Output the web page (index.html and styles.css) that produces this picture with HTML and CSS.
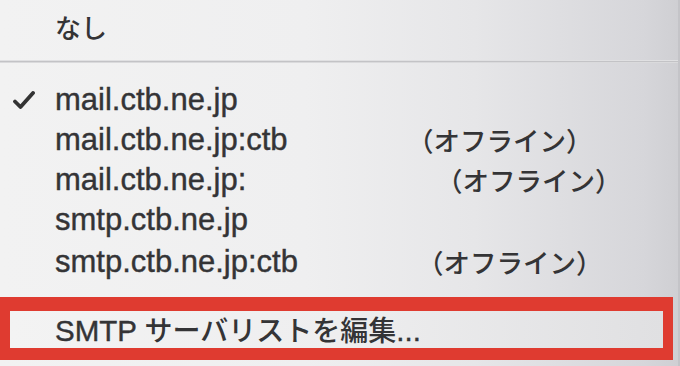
FILE: index.html
```html
<!DOCTYPE html>
<html lang="ja">
<head>
<meta charset="utf-8">
<title>SMTP</title>
<link rel="stylesheet" href="styles.css">
</head>
<body>
<div class="menu">
  <div class="item top"><span class="check"></span><span class="name jp">なし</span></div>
  <div class="sep"></div>
  <div class="list">
    <div class="item"><span class="check"><svg width="22" height="18" viewBox="0 0 22 18"><path d="M2 10.5 L7.5 16 L20 2" fill="none" stroke="#333" stroke-width="3.8" stroke-linecap="round" stroke-linejoin="round"/></svg></span><span class="name">mail.ctb.ne.jp</span></div>
    <div class="item"><span class="check"></span><span class="name">mail.ctb.ne.jp:ctb</span><span class="offline off-a">（オフライン）</span></div>
    <div class="item"><span class="check"></span><span class="name">mail.ctb.ne.jp:</span><span class="offline off-b">（オフライン）</span></div>
    <div class="item"><span class="check"></span><span class="name">smtp.ctb.ne.jp</span></div>
    <div class="item"><span class="check"></span><span class="name">smtp.ctb.ne.jp:ctb</span><span class="offline off-c">（オフライン）</span></div>
  </div>
  <div class="highlight">
    <div class="item edit"><span class="name">SMTP <span class="jp">サーバリストを編集</span>...</span></div>
  </div>
</div>
</body>
</html>
```
FILE: styles.css
```css
html, body {
  margin: 0;
  padding: 0;
}
body {
  width: 680px;
  height: 366px;
  overflow: hidden;
  font-family: "Liberation Sans", "Noto Sans CJK JP", sans-serif;
  color: #343436;
}
.menu {
  height: 366px;
  box-sizing: border-box;
  background: linear-gradient(to right, #f2f2f2 0%, #efeff0 45%, #e6e6e8 70%, #d6d6da 95%, #cfcfd3 100%);
  display: flex;
  flex-direction: column;
  border-right: 2px solid #c4c4c8;
}
.item {
  display: grid;
  grid-template-columns: 55px 352px 1fr;
  align-items: center;
  height: 40px;
  font-size: 31px;
  line-height: 40px;
}
.name {
  white-space: nowrap;
  -webkit-text-stroke: 0.4px #343436;
}
.jp {
  font-family: "Noto Sans CJK JP", sans-serif;
  font-weight: 500;
  -webkit-text-stroke: 0;
}
.item.top {
  height: 40px;
  margin-top: 7px;
  margin-bottom: 14px;
}
.top .name {
  font-size: 26px;
}
.check {
  display: flex;
  align-items: center;
  justify-content: flex-start;
  padding-left: 13px;
}
.sep {
  height: 1px;
  background: #c3c3c6;
  border-bottom: 1px solid #dadadc;
  box-shadow: 0 -1px 0 #e0e0e2;
}
.list {
  padding-top: 17px;
  display: flex;
  flex-direction: column;
}
.list .item:last-child {
  margin-top: 2px;
}
.offline {
  font-family: "Noto Sans CJK JP", sans-serif;
  font-size: 26.5px;
  font-weight: 500;
  white-space: nowrap;
}
.off-b { padding-left: 29px; }
.off-c { padding-left: 10px; }
.highlight {
  margin-top: 15px;
  border: 10px solid #df3b30;
  border-top-width: 14px;
  border-bottom-width: 12px;
  margin-right: 5px;
  background: linear-gradient(to right, #f3f3f3 0%, #eeeeef 50%, #e0e0e2 100%);
}
.item.edit {
  display: flex;
  height: 37px;
  line-height: 37px;
  padding-left: 45px;
  font-size: 29.5px;
}
.edit .jp {
  font-size: 28px;
}
```
